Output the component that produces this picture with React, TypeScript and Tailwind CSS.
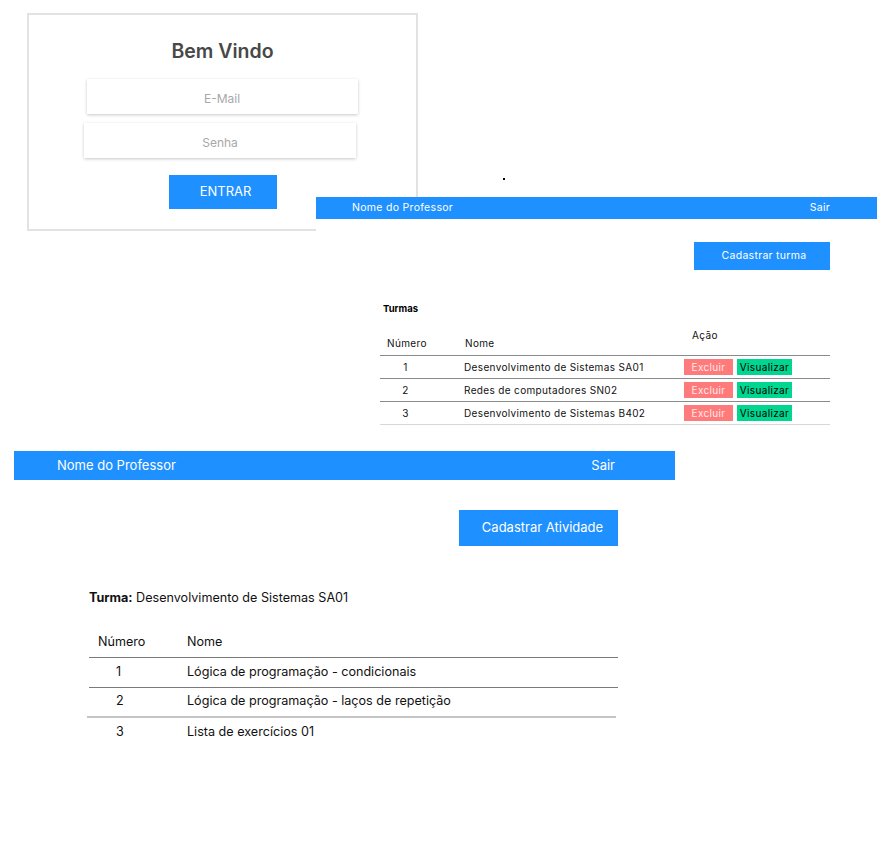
import React from 'react';

const turmas = [
  { id: 1, nome: 'Desenvolvimento de Sistemas SA01' },
  { id: 2, nome: 'Redes de computadores SN02' },
  { id: 3, nome: 'Desenvolvimento de Sistemas B402' },
];

const atividades = [
  { id: 1, nome: 'Lógica de programação - condicionais' },
  { id: 2, nome: 'Lógica de programação - laços de repetição' },
  { id: 3, nome: 'Lista de exercícios 01' },
];

const LoginCard: React.FC = () => (
  <div className="absolute left-[27px] top-[13px] w-[391px] h-[218px] bg-white border-2 border-[#e2e2e2] flex flex-col items-center">
    <h1 className="mt-[22px] text-[19.5px] leading-[28px] font-semibold text-[#484848]">Bem Vindo</h1>
    <div className="mt-[14px] w-[271px] h-[35px] mr-[1px] pt-[4px] bg-white shadow-[0_1px_3px_rgba(0,0,0,0.22)] flex items-center justify-center text-[12px] text-[#a8a8a8]">
      E-Mail
    </div>
    <div className="mt-[9px] w-[272px] h-[35px] mr-[5px] pt-[4px] bg-white shadow-[0_1px_3px_rgba(0,0,0,0.22)] flex items-center justify-center text-[12px] text-[#a8a8a8]">
      Senha
    </div>
    <button className="mt-[17px] w-[108px] h-[34px] pl-[6px] bg-[#1e90ff] text-white text-[13px]">ENTRAR</button>
  </div>
);

const TurmasScreen: React.FC = () => (
  <div className="absolute left-[316px] top-[197px] w-[561px] h-[232px] bg-white">
    <div className="h-[22px] bg-[#1e90ff] flex items-center justify-between pl-[36px] pr-[47px] text-[10.5px] text-white tracking-[0.3px]">
      <span>Nome do Professor</span>
      <span>Sair</span>
    </div>
    <div className="pl-[64px] pr-[47px]">
      <div className="flex justify-end mt-[23px]">
        <button className="w-[136px] h-[28px] bg-[#1e90ff] text-white text-[10.5px] tracking-[0.3px] pl-[4px]">
          Cadastrar turma
        </button>
      </div>
      <p className="mt-[32px] ml-[3px] text-[9.5px] font-bold text-black">Turmas</p>
      <div className="mt-[10px] text-[10px] text-[#111] tracking-[0.35px]">
        <div className="flex h-[30px] border-b border-[#8a8a8a]">
          <span className="w-[85px] pl-[7px] self-end pb-[4px]">Número</span>
          <span className="w-[226px] self-end pb-[4px]">Nome</span>
          <span className="pl-[1px] pt-[2px]">Ação</span>
        </div>
        {turmas.map((t, i) => (
          <div
            key={t.id}
            className={`flex items-center h-[23px] border-b ${i === 2 ? 'border-[#d8d8d8]' : 'border-[#8a8a8a]'}`}
          >
            <span className="w-[51px] text-center">{t.id}</span>
            <span className="w-[253px] pl-[33px]">{t.nome}</span>
            <span className="flex gap-[4px]">
              <span className="w-[49px] h-[16px] bg-[#ff7b7b] text-[#ffe9e9] flex items-center justify-center">Excluir</span>
              <span className="w-[55px] h-[16px] bg-[#00d68f] text-black flex items-center justify-center">Visualizar</span>
            </span>
          </div>
        ))}
      </div>
    </div>
  </div>
);

const AtividadesScreen: React.FC = () => (
  <div className="absolute left-[14px] top-[451px] w-[661px] h-[320px] bg-white">
    <div className="h-[29px] bg-[#1e90ff] flex items-center justify-between pl-[43px] pr-[60px] text-[13px] text-white">
      <span>Nome do Professor</span>
      <span>Sair</span>
    </div>
    <div className="pl-[75px] pr-[57px]">
      <div className="flex justify-end mt-[30px]">
        <button className="w-[159px] h-[36px] pl-[8px] bg-[#1e90ff] text-white text-[13px]">Cadastrar Atividade</button>
      </div>
      <p className="mt-[43px] text-[12.6px] text-[#111]">
        <span className="font-bold">Turma:</span> Desenvolvimento de Sistemas SA01
      </p>
      <div className="mt-[21px] text-[12.6px] text-[#111]">
        <div className="flex items-center h-[29px] border-b border-[#7a7a7a]">
          <span className="w-[98px] pl-[9px]">Número</span>
          <span>Nome</span>
        </div>
        {atividades.map((a, i) => (
          <div
            key={a.id}
            className={`flex items-center h-[30px] ${i === 0 ? 'border-b border-[#7a7a7a]' : ''} ${i === 1 ? 'border-b-2 border-[#c4c4c4] -ml-[2px] mr-[2px] pl-[2px]' : ''}`}
          >
            <span className="w-[98px] pl-[27px]">{a.id}</span>
            <span>{a.nome}</span>
          </div>
        ))}
      </div>
    </div>
  </div>
);

export default function App() {
  return (
    <div className="relative w-[877px] h-[851px] bg-white overflow-hidden font-['Inter',sans-serif]">
      <LoginCard />
      <span className="absolute left-[503px] top-[178px] w-[2px] h-[2px] bg-black" />
      <TurmasScreen />
      <AtividadesScreen />
    </div>
  );
}
